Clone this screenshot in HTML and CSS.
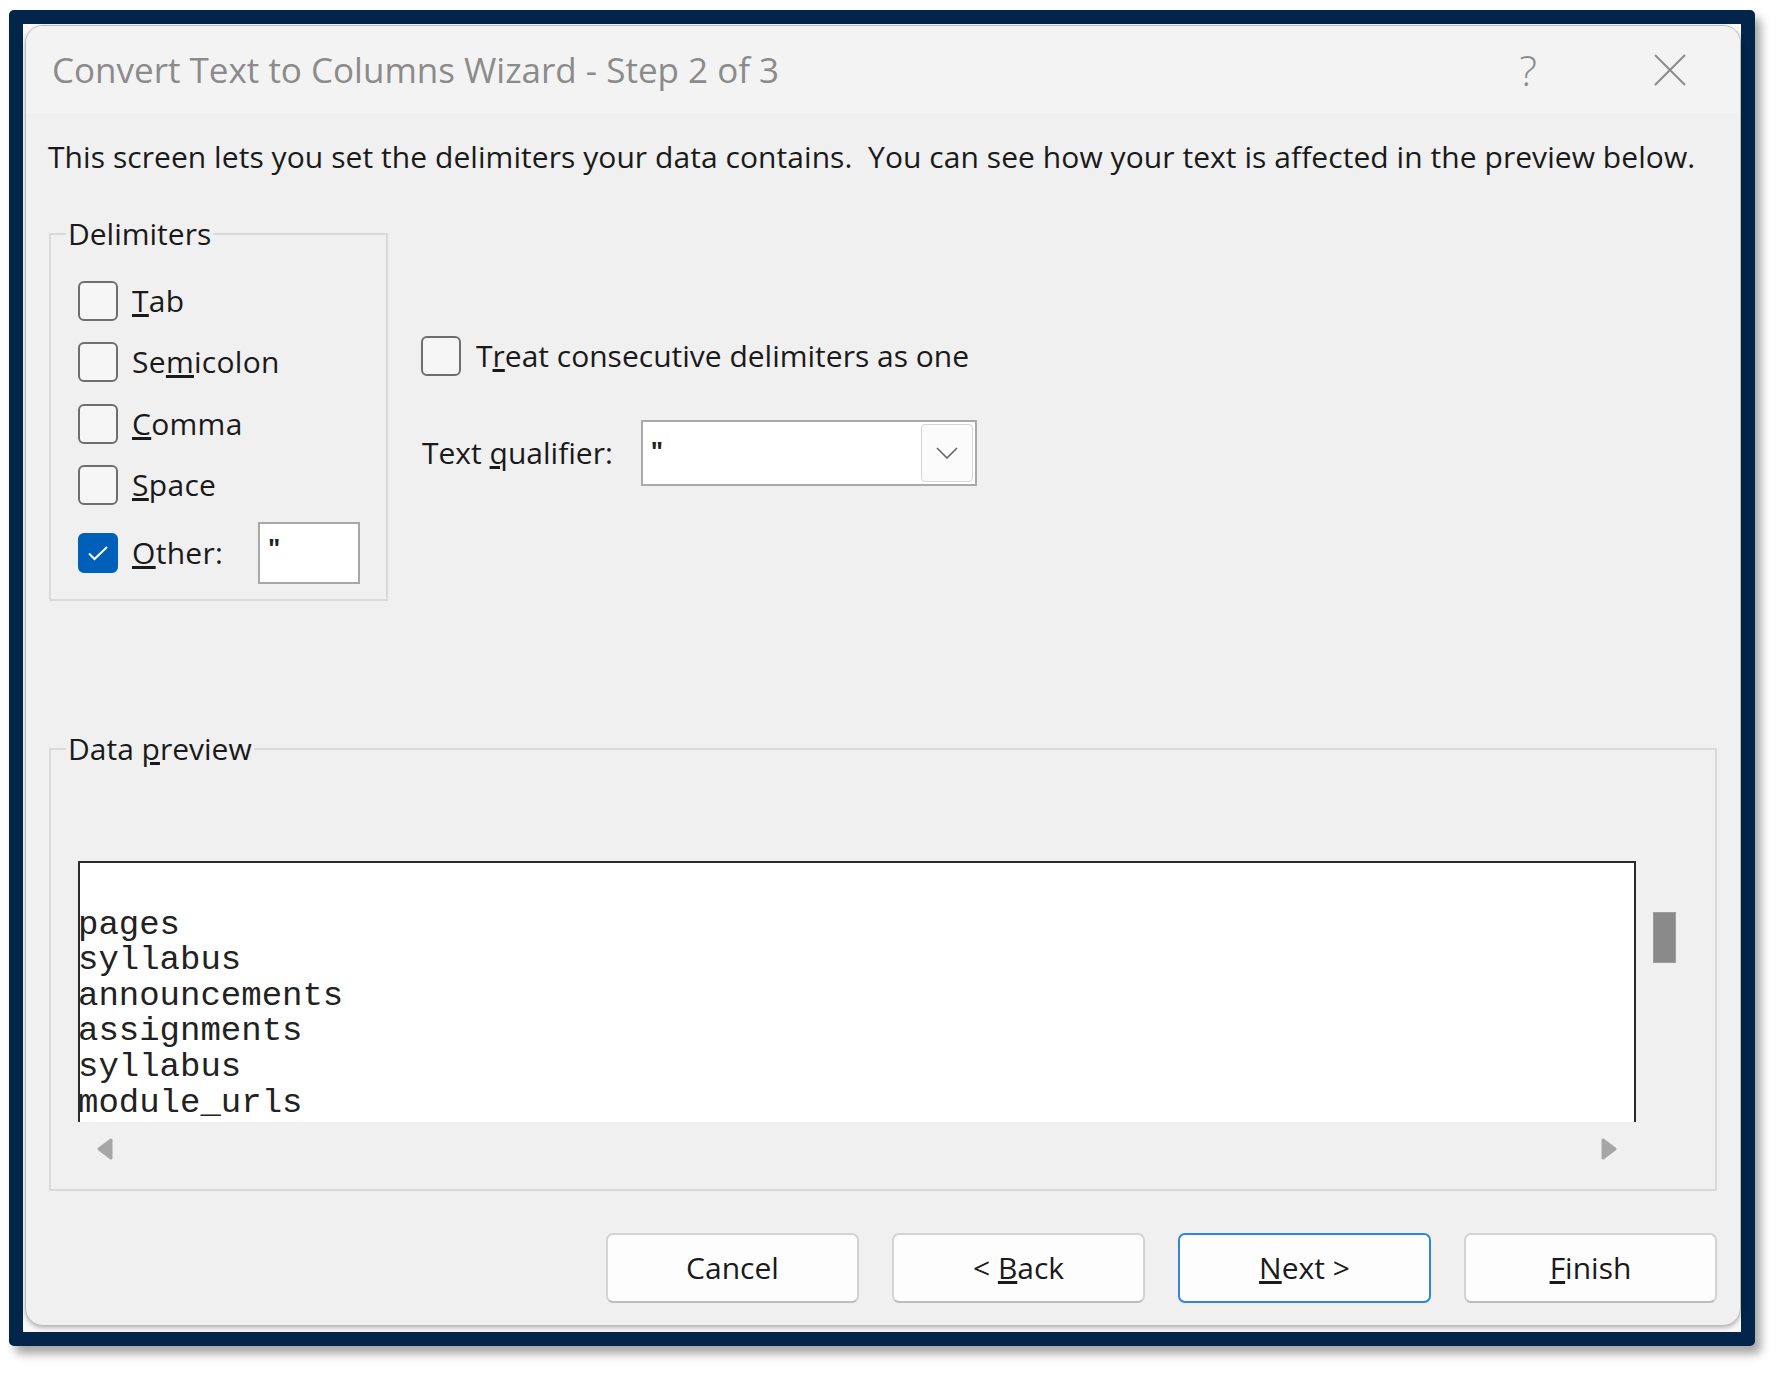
FILE: index.html
```html
<!DOCTYPE html>
<html lang="en">
<head>
<meta charset="utf-8">
<title>Convert Text to Columns Wizard - Step 2 of 3</title>
<link rel="stylesheet" href="styles.css">
</head>
<body>
<div class="frame">
  <div class="desktop">
    <div class="dialog">
      <div class="titlebar">
        <div class="title">Convert Text to Columns Wizard - Step 2 of 3</div>
        <div class="tb-btn help">?</div>
        <div class="tb-btn close">
          <svg width="32" height="32" viewBox="0 0 32 32"><path d="M1 1 L31 31 M31 1 L1 31" stroke="#8b8b8b" stroke-width="2" fill="none"/></svg>
        </div>
      </div>
      <div class="content">
        <p class="intro">This screen lets you set the delimiters your data contains.&nbsp; You can see how your text is affected in the preview below.</p>
        <div class="top">
          <fieldset class="group delims">
            <legend>Delimiters</legend>
            <div class="rows">
              <div class="row"><span class="cb"></span><span class="lbl"><u>T</u>ab</span></div>
              <div class="row"><span class="cb"></span><span class="lbl">Se<u>m</u>icolon</span></div>
              <div class="row"><span class="cb"></span><span class="lbl"><u>C</u>omma</span></div>
              <div class="row"><span class="cb"></span><span class="lbl"><u>S</u>pace</span></div>
              <div class="row other"><span class="cb checked"><svg width="22" height="16" viewBox="0 0 22 16"><path d="M2 8.5 L7.5 14 L20 2" stroke="#fff" stroke-width="2" fill="none"/></svg></span><span class="lbl"><u>O</u>ther:</span><span class="tbox">"</span></div>
            </div>
          </fieldset>
          <div class="options">
            <div class="row"><span class="cb"></span><span class="lbl">T<u>r</u>eat consecutive delimiters as one</span></div>
            <div class="row qual">
              <span class="lbl">Text <u>q</u>ualifier:</span>
              <div class="combo">
                <span class="combo-val">"</span>
                <span class="combo-btn"><svg width="22" height="12" viewBox="0 0 22 12"><path d="M1 1 L11 11 L21 1" stroke="#666" stroke-width="1.6" fill="none"/></svg></span>
              </div>
            </div>
          </div>
        </div>
        <fieldset class="group preview-group">
          <legend>Data <u>p</u>review</legend>
          <div class="preview-wrap">
            <div class="preview-row">
              <div class="preview">
                <div class="line">&nbsp;</div>
                <div class="line">pages</div>
                <div class="line">syllabus</div>
                <div class="line">announcements</div>
                <div class="line">assignments</div>
                <div class="line">syllabus</div>
                <div class="line">module_urls</div>
              </div>
              <div class="vscroll"><div class="thumb"></div></div>
            </div>
            <div class="hscroll">
              <svg width="18" height="24" viewBox="0 0 18 24"><path d="M15 3 L3 12 L15 21 Z" fill="#a6a6a6" stroke="#a6a6a6" stroke-width="3" stroke-linejoin="round"/></svg>
              <svg width="18" height="24" viewBox="0 0 18 24"><path d="M3 3 L15 12 L3 21 Z" fill="#a6a6a6" stroke="#a6a6a6" stroke-width="3" stroke-linejoin="round"/></svg>
            </div>
          </div>
        </fieldset>
        <div class="buttons">
          <button class="btn">Cancel</button>
          <button class="btn">&lt; <u>B</u>ack</button>
          <button class="btn primary"><u>N</u>ext &gt;</button>
          <button class="btn"><u>F</u>inish</button>
        </div>
      </div>
    </div>
  </div>
</div>
</body>
</html>
```

FILE: styles.css
```css
* { box-sizing: border-box; }
html, body { margin: 0; padding: 0; background: #ffffff; }
body {
  font-family: "Open Sans", "Noto Sans", sans-serif;
  color: #1a1a1a;
  width: 1784px;
  height: 1374px;
  overflow: hidden;
}
.frame {
  margin: 10px 0 0 9px;
  width: 1746px;
  height: 1336px;
  border: 14px solid #022549;
  border-radius: 5px;
  box-shadow: 6px 8px 10px rgba(0, 0, 0, 0.35);
  background: #f7f7f7;
}
.desktop {
  height: 100%;
  padding: 1px 0 6px 2px;
  background: #f8f8f8;
}
.dialog {
  height: 100%;
  background: #f0f0f0;
  border: 1px solid #b9b9b9;
  border-radius: 18px;
  box-shadow: 0 2px 4px rgba(0, 0, 0, 0.25);
  overflow: hidden;
  display: flex;
  flex-direction: column;
}
.titlebar {
  height: 87px;
  background: #f3f3f3;
  display: flex;
  align-items: center;
  padding: 0 35px 0 26px;
  flex: none;
}
.title {
  flex: 1;
  font-size: 35px;
  color: #8b8b8b;
  line-height: 44px;
  white-space: nowrap;
}
.tb-btn {
  width: 70px;
  height: 60px;
  display: flex;
  align-items: center;
  justify-content: center;
}
.help {
  font-size: 42px;
  font-weight: 300;
  color: #8b8b8b;
  margin-right: 72px;
}
.content {
  padding: 0 23px 23px 23px;
  font-size: 30px;
  line-height: 40px;
}
.intro {
  margin: 24px 0 0 -1px;
  white-space: nowrap;
  letter-spacing: 0.06px;
}
.top {
  display: flex;
  align-items: flex-start;
  margin-top: 37px;
}
.group {
  margin: 0;
  border: 2px solid #dadada;
  padding: 0;
  min-width: 0;
}
.group legend {
  padding: 0 2px;
  margin-left: 15px;
  line-height: 40px;
}
.delims {
  width: 339px;
  padding: 27px 26px 15px 0;
}
.rows {
  margin-left: 27px;
  display: flex;
  flex-direction: column;
  gap: 21.4px;
}
.row {
  display: flex;
  align-items: center;
  height: 40px;
}
.row.other {
  height: 62px;
  margin-top: -5px;
}
.cb {
  width: 40px;
  height: 40px;
  flex: none;
  border: 2px solid #6e6e6e;
  border-radius: 6px;
  background: #f6f6f6;
  margin-right: 14px;
  display: flex;
  align-items: center;
  justify-content: center;
}
.cb.checked {
  background: #005fb8;
  border-color: #005fb8;
}
.lbl { white-space: nowrap; }
.rows .lbl { letter-spacing: 0.3px; }
.tbox {
  margin-left: auto;
  width: 102px;
  height: 62px;
  background: #fff;
  border: 2px solid #a8a8a8;
  font-size: 26px;
  font-weight: 700;
  line-height: 26px;
  padding: 11px 0 0 8px;
  color: #222;
}
.options {
  margin-left: 33px;
  padding-top: 122px;
  display: flex;
  flex-direction: column;
}
.options .cb { margin-right: 15px; }
.row.qual {
  height: 66px;
  margin-top: 44px;
  padding-left: 1px;
}
.combo {
  margin-left: 28px;
  width: 336px;
  height: 66px;
  background: #fff;
  border: 2px solid #a9a9a9;
  display: flex;
  align-items: stretch;
  padding: 2px;
}
.combo-val {
  flex: 1;
  font-size: 26px;
  font-weight: 700;
  line-height: 26px;
  padding: 14px 0 0 6px;
  color: #222;
}
.combo-btn {
  width: 52px;
  border: 1px solid #d6d6d6;
  border-radius: 4px;
  background: #fbfbfb;
  display: flex;
  align-items: center;
  justify-content: center;
}
.preview-group {
  margin-top: 128px;
  padding: 92px 39px 28px 0;
}
.preview-wrap { margin-left: 27px; }
.preview-row {
  display: flex;
  align-items: flex-start;
}
.preview {
  width: 1558px;
  height: 261px;
  background: #fff;
  border: 2px solid #2b2b2b;
  border-bottom: none;
  padding-top: 9.5px;
  font-family: "Liberation Mono", "Courier New", monospace;
  font-size: 34px;
  line-height: 35.6px;
  color: #222;
  overflow: hidden;
}
.preview .line { white-space: pre; margin-left: -2px; }
.vscroll {
  width: 40px;
  padding: 51px 0 0 17px;
}
.thumb {
  width: 23px;
  height: 51px;
  background: #8a8a8a;
  border: 1px solid #9c9c9c;
}
.hscroll {
  margin-top: 15px;
  width: 1558px;
  height: 24px;
  display: flex;
  justify-content: space-between;
  padding: 0 18px 0 18px;
}
.buttons {
  margin-top: 42px;
  display: flex;
  justify-content: flex-end;
  gap: 33px;
  padding-right: 0;
}
.btn {
  width: 253px;
  height: 70px;
  font-family: inherit;
  font-size: 30px;
  color: #1a1a1a;
  background: #fdfdfd;
  border: 2px solid #d3d3d3;
  border-bottom-color: #bdbdbd;
  border-radius: 7px;
  padding: 0;
}
.btn.primary {
  border-color: #2f86dc;
}
```
